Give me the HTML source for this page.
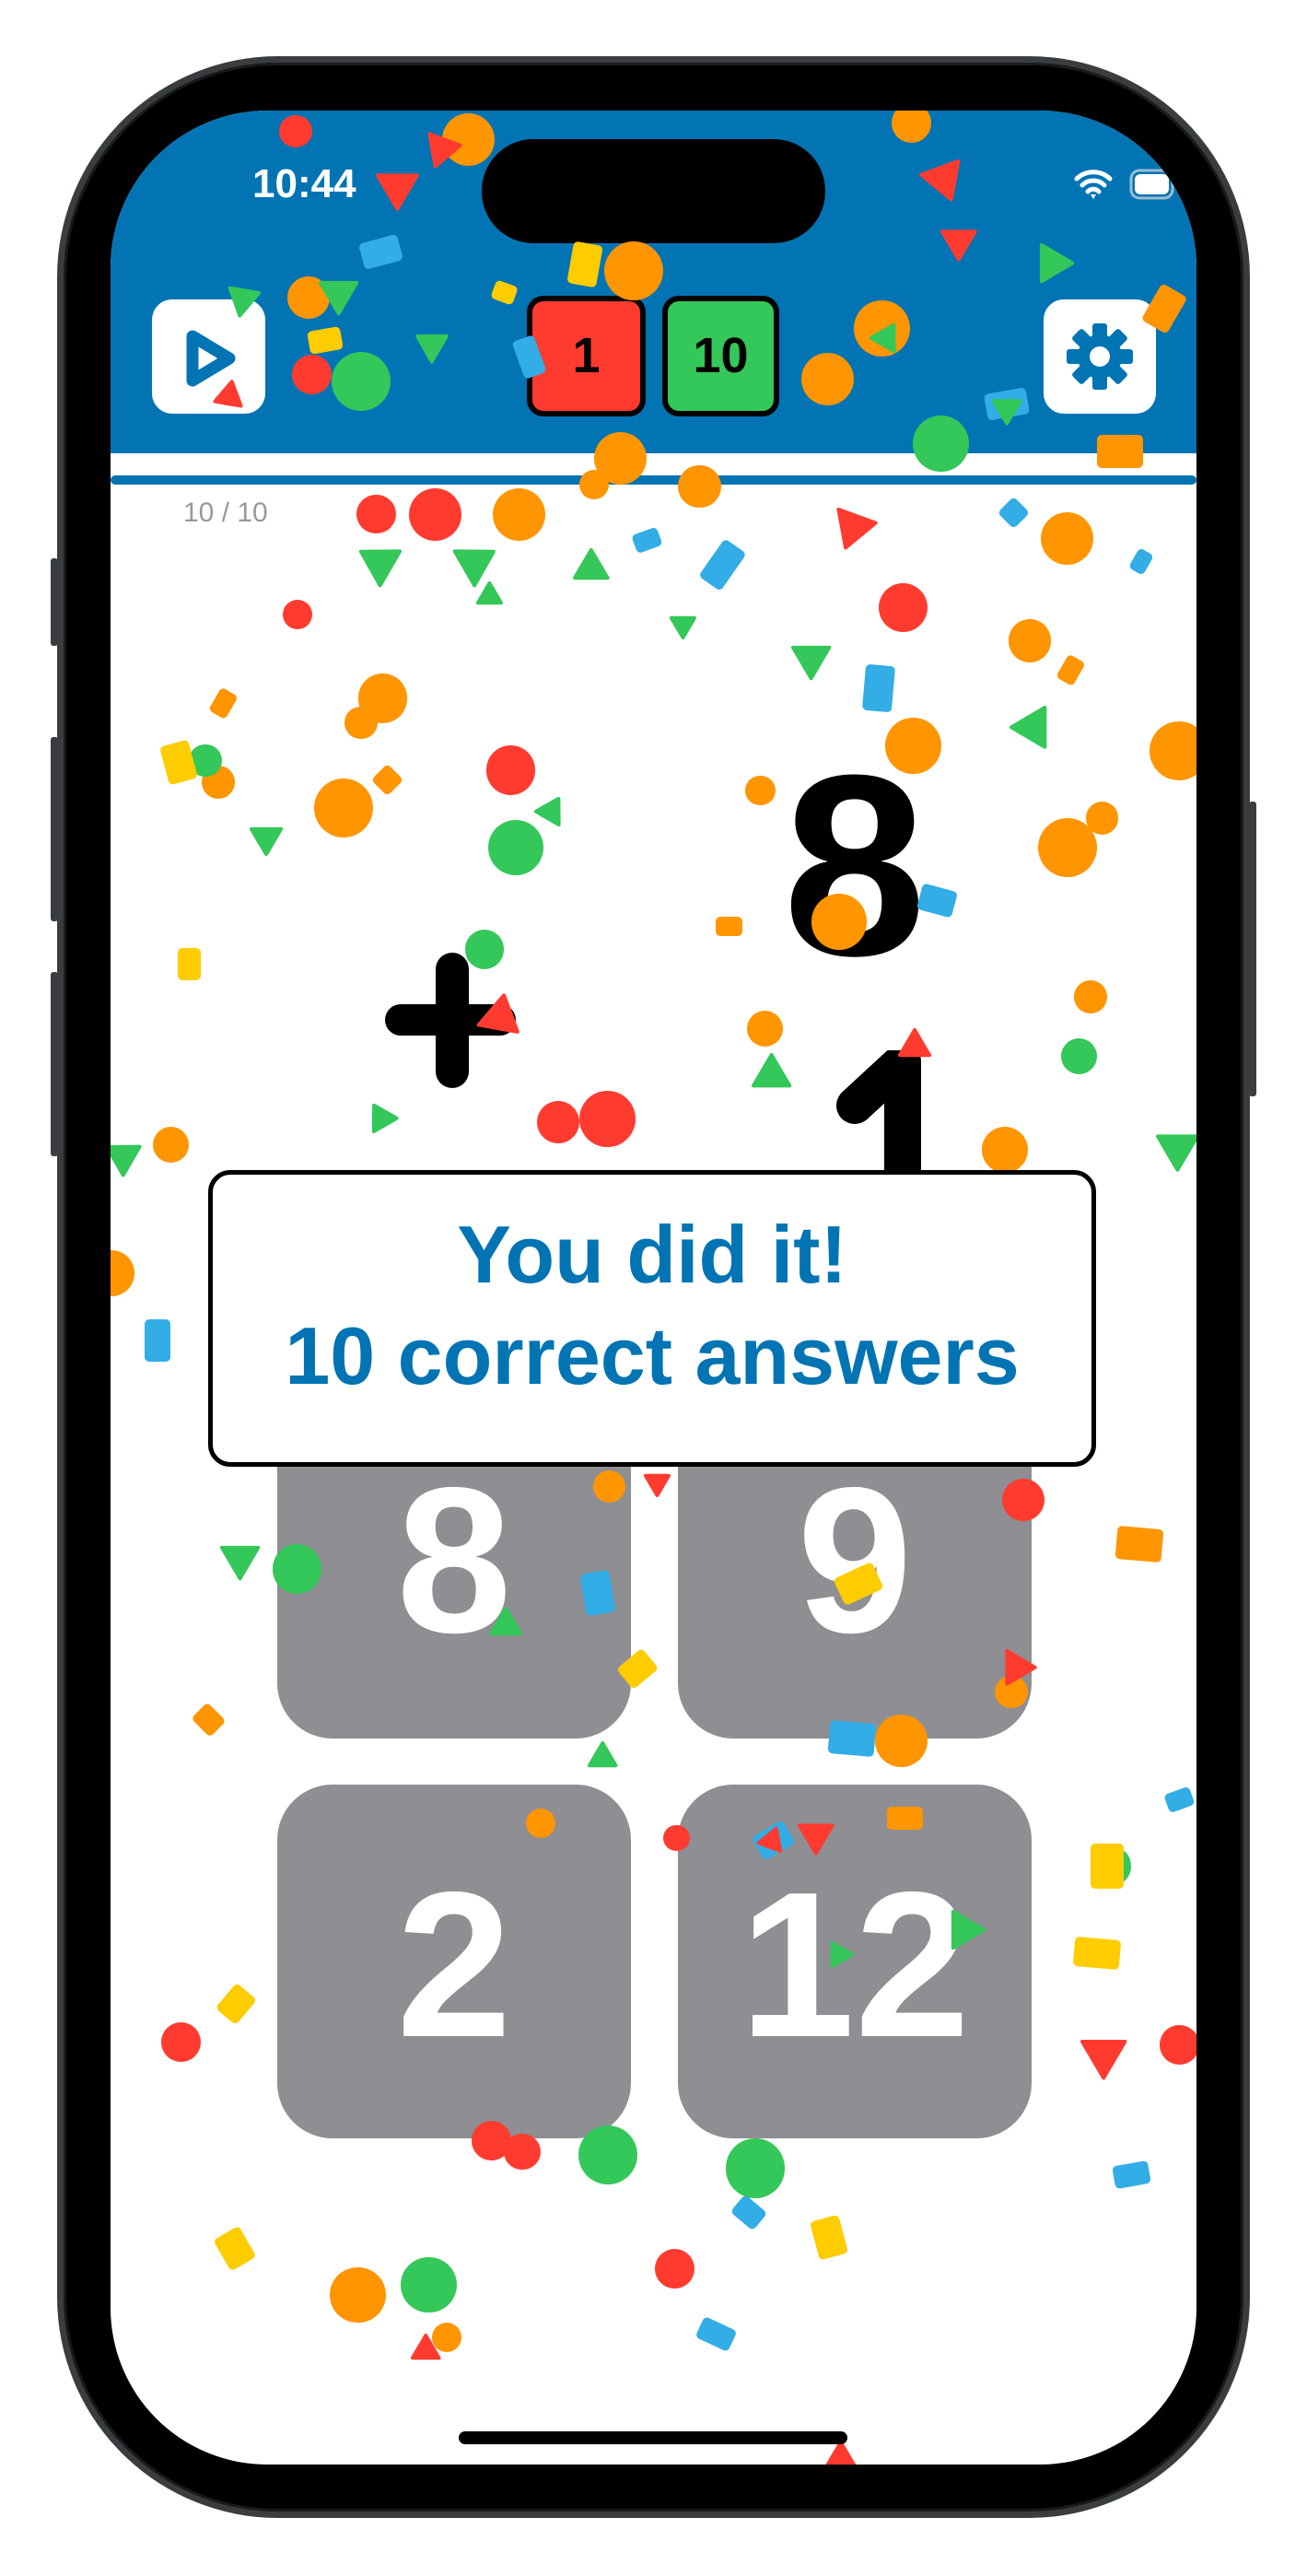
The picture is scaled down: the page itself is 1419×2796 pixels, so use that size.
<!DOCTYPE html>
<html><head><meta charset="utf-8"><style>
*{margin:0;padding:0;box-sizing:border-box}
body{width:1419px;height:2796px;background:#fff;position:relative;overflow:hidden;font-family:"Liberation Sans",sans-serif}
.abs{position:absolute}
#phone{left:62px;top:61px;width:1295px;height:2672px;border-radius:240px;background:#000;border:7px solid #3a3d40;box-shadow:inset 0 0 0 3px #1a1a1a}
#screen{left:120px;top:120px;width:1179px;height:2555px;border-radius:170px;background:#fff;overflow:hidden}
.c{position:absolute;border-radius:50%}
.r{position:absolute;border-radius:5px}
.O{background:#ff9500}.R{background:#ff3b30}.G{background:#34c759}.B{background:#32ade6}.Y{background:#ffcc00}
.tile{position:absolute;background:#8e8e93;border-radius:60px;color:#fff;font-size:225px;font-weight:bold;text-align:center;width:384px;height:384px}
</style></head><body>
<div class="abs" style="left:55px;top:606px;width:8px;height:95px;background:#3a3d40;border-radius:3px"></div>
<div class="abs" style="left:55px;top:800px;width:8px;height:200px;background:#3a3d40;border-radius:3px"></div>
<div class="abs" style="left:55px;top:1055px;width:8px;height:200px;background:#3a3d40;border-radius:3px"></div>
<div class="abs" style="left:1356px;top:870px;width:8px;height:320px;background:#3a3d40;border-radius:3px"></div>
<div id="phone" class="abs"></div>
<div id="screen" class="abs">
 <div class="abs" style="left:0;top:0;width:1179px;height:372px;background:#0274b3"></div>
 <div class="abs" style="left:0;top:396px;width:1179px;height:10px;background:#0274b3;border-radius:5px"></div>
 <div class="abs" style="left:154px;top:55px;color:#fff;font-size:44px;font-weight:bold">10:44</div>
 <svg class="abs" style="left:1045px;top:60px" width="120" height="40" viewBox="0 0 120 40">
  <path d="M4 14 A26 26 0 0 1 40 14 M10 21 A17 17 0 0 1 34 21 M16 28 A8 8 0 0 1 28 28" stroke="#fff" stroke-width="5" fill="none" stroke-linecap="round"/>
  <path d="M19 31 L22 36 L25 31Z" fill="#fff"/>
  <rect x="63" y="5" width="45" height="30" rx="9" fill="none" stroke="#ddd" stroke-width="3" opacity=".7"/>
  <rect x="67" y="9" width="37" height="22" rx="6" fill="#fff"/>
 </svg>
 <div class="abs" style="left:45px;top:205px;width:123px;height:124px;background:#fff;border-radius:22px"></div>
 <svg class="abs" style="left:45px;top:205px" width="123" height="124"><path d="M44 40 L44 88 L84 64Z" fill="none" stroke="#0274b3" stroke-width="13" stroke-linejoin="round"/></svg>
 <div class="abs" style="left:1013px;top:205px;width:122px;height:124px;background:#fff;border-radius:22px"></div>
 <svg class="abs" style="left:1013px;top:205px" width="122" height="124" viewBox="-61 -62 122 124">
  <g fill="#0274b3"><circle r="24"/>
  <g id="t"><rect x="-8" y="-36" width="16" height="16" rx="3"/></g>
  <use href="#t" transform="rotate(45)"/><use href="#t" transform="rotate(90)"/><use href="#t" transform="rotate(135)"/><use href="#t" transform="rotate(180)"/><use href="#t" transform="rotate(225)"/><use href="#t" transform="rotate(270)"/><use href="#t" transform="rotate(315)"/></g>
  <circle r="11" fill="#fff"/>
 </svg>
 <div class="abs" style="left:452px;top:201px;width:129px;height:131px;background:#ff3b30;border:6px solid #000;border-radius:18px;font-size:54px;font-weight:bold;text-align:center;line-height:118px">1</div>
 <div class="abs" style="left:599px;top:201px;width:127px;height:131px;background:#34c759;border:6px solid #000;border-radius:18px;font-size:54px;font-weight:bold;text-align:center;line-height:118px">10</div>
 <div class="abs" style="left:403px;top:31px;width:373px;height:113px;background:#000;border-radius:56px"></div>
 <div class="abs" style="left:79px;top:420px;color:#999;font-size:30px">10 / 10</div>
 <div class="abs" style="left:730px;top:680px;font-size:280px;font-weight:bold;line-height:1;color:#000">8</div>
 <div class="abs" style="left:298px;top:970px;width:142px;height:34px;background:#000;border-radius:17px"></div>
 <div class="abs" style="left:353px;top:914px;width:36px;height:147px;background:#000;border-radius:18px"></div>
 <svg class="abs" style="left:760px;top:1020px" width="160" height="200"><path d="M48 60 L100 12 L100 200" stroke="#000" stroke-width="40" fill="none" stroke-linecap="round" stroke-linejoin="round"/></svg>
 <div class="tile" style="left:181px;top:1383px;line-height:380px">8</div>
 <div class="tile" style="left:616px;top:1383px;line-height:380px">9</div>
 <div class="tile" style="left:181px;top:1817px;line-height:390px">2</div>
 <div class="tile" style="left:616px;top:1817px;line-height:390px">12</div>
 <div id="conf"></div>
 <div class="abs" style="left:106px;top:1150px;width:964px;height:322px;background:#fff;border:5px solid #000;border-radius:24px;text-align:center;color:#0274b3;font-weight:bold;font-size:88px;line-height:110px;padding-top:32px">You did it!<br>10 correct answers</div>
 <div class="abs" style="left:378px;top:2519px;width:422px;height:14px;background:#000;border-radius:7px"></div>
</div>
<script>
var k=1.783,html='';
function C(cls,a){a.forEach(function(p){var r=p[2]*k;html+='<div class="c '+cls+'" style="left:'+(p[0]*k-120-r)+'px;top:'+(p[1]*k-120-r)+'px;width:'+2*r+'px;height:'+2*r+'px"></div>'});}
C('O',[[316,313,16],[650,328,16],[627,390,13],[233,425,15],[220,440,10],[209,492,18],[133,476,10],[718,457,18],[671,498,10],[650,516,18],[463,481,9],[556,454,17],[511,561,17],[664,607,10],[466,626,11],[104,697,11],[612,700,14],[68,775,14],[371,905,10],[616,1030,10],[549,1060,16],[329,1110,9],[218,1397,17],[272,1423,9],[537,200,17],[188,181,13],[386,165,18],[378,279,16],[426,296,13],[362,295,9],[504,231,16],[285,85,16],[555,75,12]]);
C('R',[[229,313,12],[265,313,16],[181,374,9],[550,370,15],[311,469,15],[340,683,13],[370,681,17],[623,913,13],[110,1243,12],[299,1303,12],[318,1310,11],[411,1381,12],[718,1245,12],[412,1119,8],[190,228,12],[180,80,10]]);
C('G',[[314,516,17],[295,578,12],[125,463,10],[657,643,11],[181,955,15],[370,1312,18],[460,1320,18],[261,1391,17],[677,1136,12],[220,232,18],[573,270,17]]);
function Rr(cls,a){a.forEach(function(p){html+='<div class="r '+cls+'" style="left:'+(p[0]*k-120)+'px;top:'+(p[1]*k-120)+'px;width:'+p[2]*k+'px;height:'+p[3]*k+'px;transform:rotate('+p[4]+'deg)"></div>'});}
Rr('B',[[220,145,24,16,-15],[315,205,14,24,-20],[432,330,16,28,35],[386,323,16,12,-20],[526,405,18,28,5],[88,803,16,26,0],[355,957,18,26,-10],[505,1048,28,20,5],[460,1112,22,16,-30],[678,1317,22,14,-10],[425,1414,22,14,25],[447,1340,18,14,40],[560,540,22,16,15],[610,305,14,14,45],[690,335,10,14,30],[710,1090,16,12,-20],[600,238,26,16,-10]]);
Rr('Y',[[347,148,18,26,10],[300,172,14,12,20],[188,200,20,14,-10],[100,452,18,24,-15],[108,577,14,20,0],[378,1008,20,16,-40],[510,955,26,18,-25],[654,1180,28,18,5],[496,1350,18,24,-15],[134,1358,18,22,-30],[136,1210,16,20,40],[664,1122,20,28,0]]);
Rr('O',[[680,930,28,20,5],[668,265,28,20,0],[119,1040,16,14,45],[436,558,16,12,0],[540,1100,22,14,0],[700,175,18,26,30],[130,420,12,16,30],[646,400,12,16,30],[229,468,14,14,45]]);
function T(cls,a){var col={R:'#ff3b30',G:'#34c759'}[cls];a.forEach(function(p){var s=p[2]*k,x=p[0]*k-120,y=p[1]*k-120;html+='<svg class="abs" style="left:'+(x-s)+'px;top:'+(y-s)+'px;overflow:visible" width="'+2*s+'" height="'+2*s+'"><polygon transform="rotate('+p[3]+' '+s+' '+s+')" points="'+s+',0 '+2*s+','+1.7*s+' 0,'+1.7*s+'" fill="'+col+'" stroke="'+col+'" stroke-width="4" stroke-linejoin="round"/></svg>'});}
T('R',[[242,115,12,180],[584,148,10,180],[519,322,12,200],[557,636,9,0],[305,618,12,10],[400,903,7,180],[620,1015,10,90],[672,1252,13,180],[497,1118,10,180],[470,1120,7,20],[259,1430,8,0],[512,1497,10,0],[140,240,8,10],[270,90,10,80],[575,110,12,160]]);
T('G',[[230,342,12,-60],[290,342,12,60],[360,345,10,0],[298,362,7,0],[416,381,7,180],[494,402,11,180],[628,443,12,-90],[336,493,8,30],[162,511,9,180],[470,653,11,0],[232,680,8,-30],[717,700,12,180],[308,988,9,0],[146,950,11,180],[367,1069,8,0],[588,1175,11,90],[512,1190,7,90],[147,181,9,-50],[206,180,11,180],[642,160,11,90],[262,209,9,-60],[540,205,8,30],[613,250,8,180],[74,703,10,-60]]);
document.getElementById('conf').outerHTML=html;
</script>
</body></html>
